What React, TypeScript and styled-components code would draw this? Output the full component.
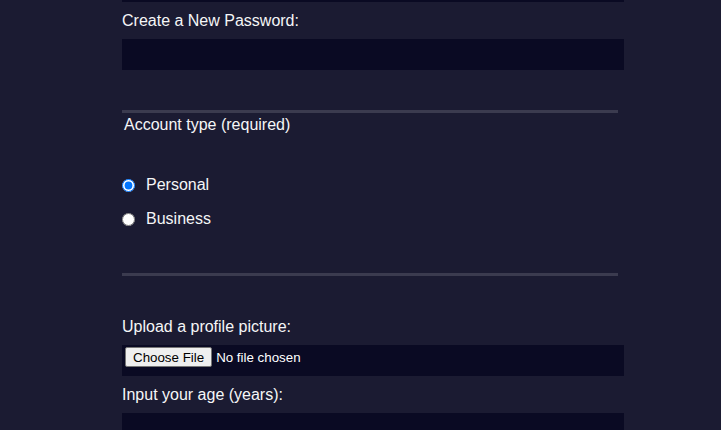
import React from "react";
import styled, { createGlobalStyle } from "styled-components";

const GlobalStyle = createGlobalStyle`
  html, body {
    margin: 0;
    padding: 0;
    overflow: hidden;
  }
  body {
    background: #1b1b32;
    color: #f5f6f7;
    font-family: "Liberation Sans", Arial, sans-serif;
    font-size: 16px;
  }
`;

const Form = styled.form`
  display: flow-root;
  width: 500px;
  margin: -29px 0 0 120px;
`;

const Section = styled.div<{ $pt: number; $pb: number; $last?: boolean }>`
  margin: 0 2px 2px;
  padding: ${(p) => p.$pt}px 0 ${(p) => p.$pb}px;
  border-bottom: ${(p) => (p.$last ? "none" : "3px solid #3b3b4f")};
`;

const Legend = styled.div`
  padding: 0 2px;
  line-height: 19px;
`;

const Field = styled.label`
  display: block;
  margin: 9px 0;
  line-height: 19px;
`;

const TextInput = styled.input`
  display: block;
  box-sizing: content-box;
  width: 100%;
  height: 27px;
  margin: 9px 0 0;
  padding: 1px 2px;
  border: 1px solid #0a0a23;
  background: #0a0a23;
  color: #ffffff;
  font-family: "Liberation Sans", Arial, sans-serif;
  font-size: 13.333px;
  outline: none;
`;

const PreviousInput = styled(TextInput)`
  margin-top: 0;
`;

const FileInput = styled(TextInput)`
  &::file-selector-button {
    font-family: "Liberation Sans", Arial, sans-serif;
    font-size: 13.333px;
    height: 20px;
    margin: 0 4px 0 0;
    padding: 1px 7px;
    background: #efefef;
    color: #000000;
    border: 1px solid #767676;
    border-radius: 2px;
  }
`;

const RadioGroup = styled.div`
  padding-top: 29px;
`;

const RadioRow = styled.label`
  display: flex;
  align-items: center;
  gap: 11px;
  height: 25px;
  margin: 9px 0;
  line-height: 19px;
`;

const Radio = styled.input`
  width: 13px;
  height: 13px;
  margin: 2px 0 0;
`;

export default function App() {
  return (
    <>
      <GlobalStyle />
      <Form onSubmit={(e) => e.preventDefault()}>
        <Section $pt={0} $pb={31}>
          <PreviousInput type="email" name="email" aria-label="Email" />
          <Field>
            Create a New Password:
            <TextInput type="password" name="password" />
          </Field>
        </Section>
        <Section $pt={0} $pb={33}>
          <Legend>Account type (required)</Legend>
          <RadioGroup>
            <RadioRow>
              <Radio type="radio" name="account-type" defaultChecked />
              Personal
            </RadioRow>
            <RadioRow>
              <Radio type="radio" name="account-type" />
              Business
            </RadioRow>
          </RadioGroup>
        </Section>
        <Section $pt={30} $pb={31} $last>
          <Field>
            Upload a profile picture:
            <FileInput type="file" name="file" />
          </Field>
          <Field>
            Input your age (years):
            <TextInput type="number" name="age" min={13} max={120} />
          </Field>
        </Section>
      </Form>
    </>
  );
}
